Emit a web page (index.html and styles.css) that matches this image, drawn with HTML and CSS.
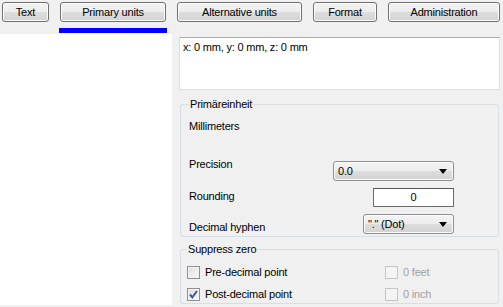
FILE: index.html
```html
<!DOCTYPE html>
<html lang="en">
<head>
    <meta charset="UTF-8">
    <title>Dimension settings</title>
    <link rel="stylesheet" href="styles.css">
</head>
<body>
    <nav class="tabs">
        <div class="tab"><button class="tab-btn w-text">Text</button></div>
        <div class="tab active"><button class="tab-btn w-primary">Primary units</button><div class="tab-bar"></div></div>
        <div class="tab"><button class="tab-btn w-alt">Alternative units</button></div>
        <div class="tab"><button class="tab-btn w-format">Format</button></div>
        <div class="tab"><button class="tab-btn w-admin">Administration</button></div>
    </nav>

    <div class="main">
        <aside class="side"></aside>

        <section class="content">
            <div class="preview">x: 0 mm, y: 0 mm, z: 0 mm</div>

            <fieldset class="group group-units">
                <legend>Primäreinheit</legend>
                <div class="unit-name">Millimeters</div>

                <div class="row row-first">
                    <span class="lbl lbl-precision">Precision</span>
                    <div class="combo w-precision">0.0
                        <svg class="arrow" width="8" height="5" viewBox="0 0 8 5"><path d="M0 0H8L4 5Z" fill="#000"/></svg>
                    </div>
                </div>
                <div class="row">
                    <span class="lbl lbl-rounding">Rounding</span>
                    <div class="field w-rounding">0</div>
                </div>
                <div class="row">
                    <span class="lbl lbl-decimal">Decimal hyphen</span>
                    <div class="combo w-decimal">"." (Dot)
                        <svg class="arrow" width="8" height="5" viewBox="0 0 8 5"><path d="M0 0H8L4 5Z" fill="#000"/></svg>
                    </div>
                </div>
            </fieldset>

            <fieldset class="group group-zero">
                <legend>Suppress zero</legend>
                <div class="checks">
                    <label class="check"><span class="box"></span>Pre-decimal point</label>
                    <label class="check disabled"><span class="box"></span>0 feet</label>
                    <label class="check"><span class="box">
                        <svg width="11" height="11" viewBox="0 0 11 11"><path d="M2 5.5L4.3 8.3L9 2" fill="none" stroke="#3b5aa6" stroke-width="2"/></svg>
                    </span>Post-decimal point</label>
                    <label class="check disabled"><span class="box"></span>0 inch</label>
                </div>
            </fieldset>
        </section>
    </div>
</body>
</html>
```

FILE: styles.css
```css
body {
    margin: 0;
    background: #f0f0f0;
    font-family: "Liberation Sans", Arial, sans-serif;
    font-size: 11px;
    letter-spacing: -0.2px;
    color: #000;
    height: 307px;
    overflow: hidden;
}

.tabs {
    display: flex;
    gap: 11px;
    padding: 2px 0 0 2px;
    height: 34px;
    box-sizing: border-box;
}

.tab {
    display: flex;
    flex-direction: column;
}

.tab-btn {
    height: 20px;
    padding: 0;
    font: inherit;
    letter-spacing: inherit;
    color: #000;
    border: 1px solid #707070;
    border-radius: 3px;
    background: linear-gradient(#f4f4f4 0%, #ececec 50%, #dedede 51%, #d2d2d2 100%);
    box-shadow: inset 0 0 0 1px #fcfcfc;
}

.w-text { width: 47px; }
.w-primary { width: 106px; }
.w-alt { width: 125px; }
.w-format { width: 64px; }
.w-admin { width: 112px; }

.tab-bar {
    height: 5px;
    margin: 6px -1px 0;
    background: #0000ff;
}

.main {
    display: flex;
    height: 271px;
}

.side {
    width: 172px;
    background: #fff;
}

.content {
    flex: 1;
    padding: 3px 3px 0 7px;
}

.preview {
    height: 53px;
    box-sizing: border-box;
    background: #fff;
    border: 1px solid #dcdfe3;
    border-top-color: #a9abb0;
    padding: 3px 3px;
    line-height: 13px;
}

.group {
    margin: 8px 1px 0;
    padding: 0 8px;
    border: 1px solid #d5dfe5;
    border-radius: 3px;
}

.group legend {
    padding: 0 1px;
    line-height: 13px;
}

.unit-name {
    margin-top: 9px;
    line-height: 13px;
}

.row {
    display: flex;
    justify-content: space-between;
    align-items: flex-start;
    padding-right: 36px;
    margin-top: 7px;
}

.row-first {
    margin-top: 28px;
}

.lbl {
    line-height: 13px;
}

.lbl-precision { margin-top: -3px; }
.lbl-rounding { margin-top: 2px; }
.lbl-decimal { margin-top: 7px; }

.group-units {
    padding-bottom: 2px;
}

.combo {
    position: relative;
    height: 20px;
    box-sizing: border-box;
    border: 1px solid #8e8f8f;
    border-radius: 3px;
    background: linear-gradient(#f4f4f4 0%, #ececec 50%, #dedede 51%, #d2d2d2 100%);
    box-shadow: inset 0 0 0 1px #fbfbfb;
    padding-left: 4px;
    line-height: 18px;
}

.arrow {
    position: absolute;
    right: 6px;
    top: 7px;
}

.w-precision { width: 121px; }
.w-decimal { width: 91px; }

.field {
    height: 19px;
    box-sizing: border-box;
    border: 1px solid #6b6b6b;
    border-top-color: #555;
    background: #fff;
    text-align: center;
    line-height: 17px;
}

.w-rounding { width: 81px; }

.group-zero {
    margin-top: 6px;
    padding: 0 6px 2px;
}

.checks {
    display: grid;
    grid-template-columns: 198px 1fr;
    row-gap: 9px;
    margin-top: 10px;
}

.check {
    display: flex;
    align-items: center;
    gap: 5px;
    height: 13px;
    line-height: 13px;
}

.box {
    width: 13px;
    height: 13px;
    box-sizing: border-box;
    border: 1px solid #8e8f8f;
    background: linear-gradient(135deg, #dcdcdc, #fbfbfb);
    box-shadow: inset 0 0 0 1px #f4f4f4;
    display: flex;
    align-items: center;
    justify-content: center;
}

.check.disabled {
    color: #a0a0a0;
}

.check.disabled .box {
    border-color: #c5c5c5;
    background: #f4f4f4;
    box-shadow: none;
}
```
